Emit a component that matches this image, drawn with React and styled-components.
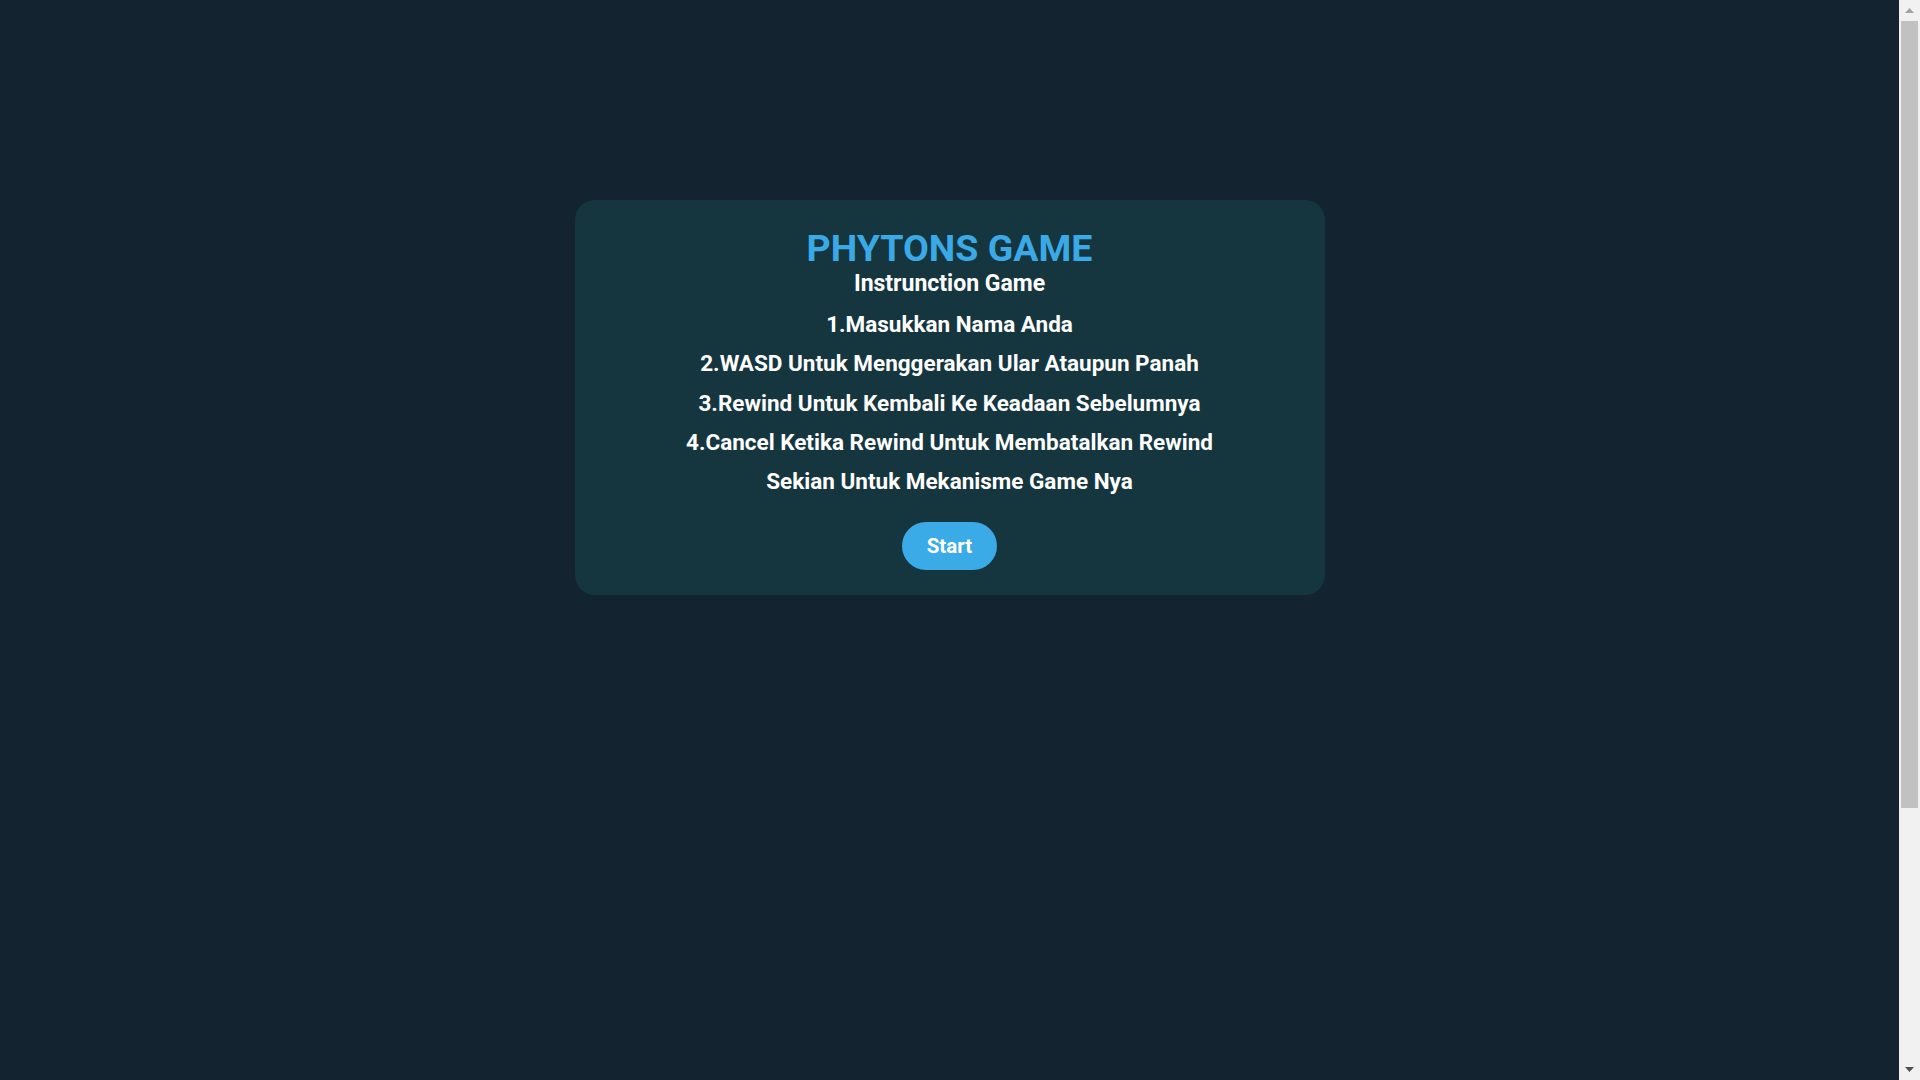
import React from "react";
import styled, { createGlobalStyle } from "styled-components";

const GlobalStyle = createGlobalStyle`
  html, body {
    margin: 0;
    padding: 0;
    background-color: #132330;
  }
  body {
    font-family: Roboto, "Liberation Sans", sans-serif;
  }
`;

const Page = styled.div`
  min-height: 1425px;
  display: flex;
  flex-direction: column;
  align-items: center;
  padding: 200px 21px 0 0;
  box-sizing: border-box;
`;

const Card = styled.div`
  width: 750px;
  background-color: #15363f;
  border-radius: 20px;
  padding: 33px 20px 25px;
  box-sizing: border-box;
  display: flex;
  flex-direction: column;
  align-items: center;
  color: #ffffff;
`;

const Title = styled.h1`
  margin: 0;
  font-size: 37.5px;
  line-height: 30px;
  font-weight: 700;
  color: #3aa9e6;
`;

const Subtitle = styled.h2`
  margin: 0;
  font-size: 23px;
  line-height: 42px;
  font-weight: 700;
`;

const Line = styled.p`
  margin: 0;
  font-size: 22.5px;
  line-height: 39.3px;
  font-weight: 700;
  text-align: center;
`;

const StartButton = styled.button`
  margin-top: 20.5px;
  width: 95px;
  height: 48px;
  border: none;
  border-radius: 24px;
  background-color: #3aabe6;
  color: #ffffff;
  font-family: Roboto, "Liberation Sans", sans-serif;
  font-size: 20.5px;
  font-weight: 700;
  cursor: pointer;
`;

/* stand-in for the browser's vertical scrollbar */
const Scrollbar = styled.div`
  position: fixed;
  top: 0;
  right: 0;
  width: 21px;
  height: 100vh;
  background-color: #f1f1f1;
  display: flex;
  flex-direction: column;
`;

const ArrowButton = styled.div`
  height: 21px;
  flex-shrink: 0;
  display: flex;
  align-items: center;
  justify-content: center;
`;

const Track = styled.div`
  flex: 1;
  padding: 0 2px;
`;

const Thumb = styled.div`
  height: 787px;
  background-color: #c1c1c1;
`;

const Arrow = ({ up, color }) => (
  <svg width="9" height="5" viewBox="0 0 9 5">
    <polygon points={up ? "4.5,0 9,5 0,5" : "0,0 9,0 4.5,5"} fill={color} />
  </svg>
);

const steps = [
  "1.Masukkan Nama Anda",
  "2.WASD Untuk Menggerakan Ular Ataupun Panah",
  "3.Rewind Untuk Kembali Ke Keadaan Sebelumnya",
  "4.Cancel Ketika Rewind Untuk Membatalkan Rewind",
  "Sekian Untuk Mekanisme Game Nya",
];

const App = () => {
  return (
    <>
      <GlobalStyle />
      <Page>
        <Card>
          <Title>PHYTONS GAME</Title>
          <Subtitle>Instrunction Game</Subtitle>
          {steps.map((text) => (
            <Line key={text}>{text}</Line>
          ))}
          <StartButton>Start</StartButton>
        </Card>
      </Page>
      <Scrollbar>
        <ArrowButton>
          <Arrow up color="#a3a3a3" />
        </ArrowButton>
        <Track>
          <Thumb />
        </Track>
        <ArrowButton>
          <Arrow color="#505050" />
        </ArrowButton>
      </Scrollbar>
    </>
  );
};

export default App;
